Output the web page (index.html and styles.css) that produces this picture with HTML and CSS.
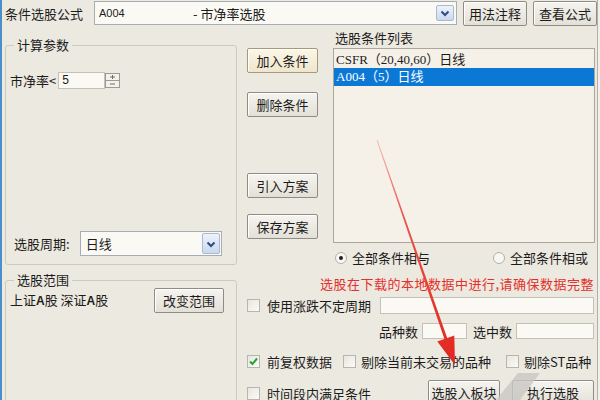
FILE: index.html
```html
<!DOCTYPE html>
<html lang="zh-CN">
<head>
  <meta charset="UTF-8">
  <title>条件选股</title>
  <link rel="stylesheet" href="styles.css">
</head>
<body>

  <div class="window">

    <!-- formula selector -->
    <div class="top-bar">
      <span class="top-label">条件选股公式</span>
      <div class="combo formula-combo">
        <span class="formula-code">A004</span>
        <span class="formula-name">- 市净率选股</span>
        <span class="drop-btn top-drop">
          <svg width="12" height="12" viewBox="0 0 12 12"><path d="M2.5 4.5 L6 8 L9.5 4.5" fill="none" stroke="#2d4d80" stroke-width="2"/></svg>
        </span>
      </div>
      <button class="btn top-btn">用法注释</button>
      <button class="btn top-btn">查看公式</button>
    </div>

    <div class="main">

      <!-- left column: parameters + market range -->
      <div class="left-col">
        <fieldset class="group params">
          <legend>计算参数</legend>
          <div class="param-row">
            <span>市净率&lt;</span>
            <span class="field param-input">5</span>
            <span class="spinner">
              <svg width="15" height="15" viewBox="0 0 15 15">
                <rect x="0.5" y="0.5" width="14" height="14" fill="#f3f1ea" stroke="#9c9a92"/>
                <line x1="1" y1="7.5" x2="14" y2="7.5" stroke="#9c9a92"/>
                <line x1="5" y1="4" x2="10" y2="4" stroke="#6d6b66"/>
                <line x1="7.5" y1="2" x2="7.5" y2="6" stroke="#6d6b66"/>
                <line x1="5" y1="11" x2="10" y2="11" stroke="#6d6b66"/>
              </svg>
            </span>
          </div>
          <div class="period-row">
            <span>选股周期:</span>
            <div class="combo period-combo">
              <span class="period-text">日线</span>
              <span class="drop-btn period-drop">
                <svg width="12" height="12" viewBox="0 0 12 12"><path d="M2.5 4.5 L6 8 L9.5 4.5" fill="none" stroke="#2d4d80" stroke-width="2"/></svg>
              </span>
            </div>
          </div>
        </fieldset>

        <fieldset class="group range">
          <legend>选股范围</legend>
          <div class="range-row">
            <span class="market">上证<b>A</b>股 深证<b>A</b>股</span>
            <button class="btn range-btn">改变范围</button>
          </div>
        </fieldset>
      </div>

      <!-- right column: actions, condition list, options -->
      <div class="right-col">
        <div class="upper">
          <div class="action-col">
            <button class="btn action-btn add-btn">加入条件</button>
            <button class="btn action-btn del-btn">删除条件</button>
            <button class="btn action-btn import-btn">引入方案</button>
            <button class="btn action-btn save-btn">保存方案</button>
          </div>
          <div class="list-col">
            <div class="list-title">选股条件列表</div>
            <ul class="cond-list">
              <li>CSFR（20,40,60）日线</li>
              <li class="selected">A004（5）日线</li>
            </ul>
          </div>
        </div>

        <div class="radio-row">
          <span class="radio on"><span class="dot"></span></span>
          <span class="radio-text">全部条件相与</span>
          <span class="radio second"></span>
          <span class="radio-text">全部条件相或</span>
        </div>

        <div class="notice">选股在下载的本地数据中进行,请确保数据完整</div>

        <div class="opt-row row-cycle">
          <span class="check"></span>
          <span class="opt-text">使用涨跌不定周期</span>
          <span class="field cycle-field"></span>
        </div>

        <div class="opt-row row-count">
          <span class="count-label">品种数</span>
          <span class="field count-field"></span>
          <span class="count-label picked">选中数</span>
          <span class="field picked-field"></span>
        </div>

        <div class="opt-row row-flags">
          <span class="check">
            <svg width="11" height="11" viewBox="0 0 11 11"><path d="M2 5.5 L4.5 8 L9 2.5" fill="none" stroke="#26a23a" stroke-width="2"/></svg>
          </span>
          <span class="opt-text">前复权数据</span>
          <span class="check flag2"></span>
          <span class="opt-text">剔除当前未交易的品种</span>
          <span class="check flag3"></span>
          <span class="opt-text">剔除ST品种</span>
        </div>

        <div class="opt-row row-run">
          <span class="check run-check"></span>
          <span class="opt-text run-text">时间段内满足条件</span>
          <button class="btn block-btn">选股入板块</button>
          <button class="btn run-btn">执行选股</button>
        </div>
      </div>
    </div>
  </div>

  <!-- red annotation arrow + watermark drawn over the dialog -->
  <svg class="overlay" width="600" height="400" viewBox="0 0 600 400">
    <defs>
      <linearGradient id="fade" x1="377" y1="140" x2="455" y2="365" gradientUnits="userSpaceOnUse">
        <stop offset="0" stop-color="#f3b9b0"/>
        <stop offset="0.35" stop-color="#e8544a"/>
        <stop offset="1" stop-color="#e2261d"/>
      </linearGradient>
    </defs>
    <polygon points="496,400 518,373 540,373 520,400" fill="#c9c7c2" opacity="0.8"/>
    <polygon points="376.6,140.2 377.4,139.8 447.2,337.9 454.3,335.5 455,365 437.3,341.5 444.4,339" fill="url(#fade)"/>
  </svg>

</body>
</html>
```

FILE: styles.css
```css
body {
  margin: 0;
  width: 600px;
  height: 400px;
  overflow: hidden;
  position: relative;
  background-color: #f1efea;
  color: #1c1c1c;
  font-family: "Noto Sans CJK SC", sans-serif;
  font-size: 13px;
  line-height: 17px;
}

.window {
  box-sizing: border-box;
  width: 598px;
  height: 400px;
  background-color: #ece9e0;
  border-left: 2px solid #4a8fca;
  border-right: 1px solid #b3b0a6;
}

/* buttons */
.btn {
  font: inherit;
  color: #1c1c1c;
  height: 25px;
  padding: 0;
  border: 1px solid #8f8c85;
  border-radius: 2px;
  background: linear-gradient(#f6f4ef, #e3e0d7);
  box-shadow: inset 1px 1px 0 #ffffff;
}

/* top bar */
.top-bar {
  display: flex;
  align-items: center;
  height: 26px;
  padding-left: 3px;
}

.top-label {
  margin-right: 11px;
}

.combo {
  box-sizing: border-box;
  display: flex;
  align-items: center;
  border: 1px solid #a8adb5;
  background-color: #fbf9f4;
}

.formula-combo {
  width: 363px;
  height: 24px;
  padding-left: 4px;
}

.formula-code {
  width: 94px;
  font-family: "Liberation Sans", sans-serif;
  font-size: 11px;
}

.drop-btn {
  box-sizing: border-box;
  display: flex;
  align-items: center;
  justify-content: center;
  margin-left: auto;
  border: 1px solid #a9bbd3;
  border-radius: 2px;
  background: linear-gradient(#eef3fa, #c9d9ee);
}

.top-drop {
  width: 18px;
  height: 16px;
  margin-right: 2px;
}

.top-btn {
  width: 64px;
  margin-left: 6px;
}

/* main area */
.main {
  display: flex;
  gap: 10px;
  padding-left: 3px;
}

.left-col {
  width: 232px;
}

.group {
  box-sizing: border-box;
  margin: 0;
  padding: 0;
  min-width: 0;
  border: 1px solid #cdcabf;
  border-radius: 3px;
}

.group legend {
  margin-left: 8px;
  padding: 0 3px;
  line-height: 16px;
}

.params {
  height: 228px;
  margin-top: 11px;
}

.param-row {
  display: flex;
  align-items: center;
  height: 17px;
  margin: 19px 0 0 4px;
}

.field {
  box-sizing: border-box;
  display: inline-block;
  border: 1px solid #c4c1b8;
  background-color: #fbf9f4;
}

.param-input {
  width: 47px;
  height: 17px;
  margin-left: 2px;
  padding-left: 3px;
  font-family: "Liberation Sans", sans-serif;
  font-size: 12px;
  line-height: 15px;
}

.spinner {
  display: flex;
}

.period-row {
  display: flex;
  align-items: center;
  height: 25px;
  margin: 142px 0 0 8px;
}

.period-combo {
  width: 142px;
  height: 25px;
  margin-left: 10px;
  padding-left: 5px;
}

.period-drop {
  width: 18px;
  height: 21px;
  margin-right: 1px;
}

.range {
  height: 140px;
  margin-top: 7px;
}

.range-row {
  display: flex;
  align-items: center;
  height: 25px;
  margin-left: 4px;
}

.market b {
  font-family: "Liberation Sans", sans-serif;
  font-size: 12px;
}

.range-btn {
  width: 70px;
  margin-left: auto;
  margin-right: 12px;
}

/* right column */
.right-col {
  width: 350px;
  display: flex;
  flex-direction: column;
}

.upper {
  display: flex;
  gap: 15px;
  height: 217px;
}

.action-col {
  display: flex;
  flex-direction: column;
  width: 71px;
}

.action-btn {
  width: 71px;
}

.add-btn {
  margin-top: 22px;
  background: linear-gradient(#fbf6e6, #efe6cc);
  border-color: #a59a7c;
}

.del-btn {
  margin-top: 19px;
}

.import-btn {
  margin-top: 56px;
}

.save-btn {
  margin-top: 16px;
}

.list-col {
  width: 262px;
}

.list-title {
  margin-top: 4px;
  padding-left: 2px;
  line-height: 16px;
}

.cond-list {
  box-sizing: border-box;
  height: 195px;
  margin: 2px 0 0;
  padding: 3px 0;
  list-style: none;
  border: 1px solid #aaa69b;
  background-color: #f6f1e8;
  font-family: "Liberation Serif", "Noto Sans CJK SC", serif;
  font-size: 13px;
}

.cond-list li {
  height: 16px;
  line-height: 16px;
  padding-left: 2px;
}

.cond-list li.selected {
  height: 18px;
  line-height: 18px;
  background-color: #0c78d5;
  color: #ffffff;
}

.radio-row {
  display: flex;
  align-items: center;
  height: 17px;
  margin-top: 6px;
  padding-left: 88px;
}

.radio {
  box-sizing: border-box;
  display: flex;
  align-items: center;
  justify-content: center;
  width: 12px;
  height: 12px;
  border: 1px solid #b4b1a8;
  border-radius: 50%;
  background-color: #f8f7f3;
}

.radio .dot {
  width: 4px;
  height: 4px;
  border-radius: 50%;
  background-color: #222222;
}

.radio.second {
  margin-left: 63px;
}

.radio-text {
  margin-left: 5px;
}

.notice {
  margin-top: 9px;
  padding-right: 3px;
  text-align: right;
  letter-spacing: 0.5px;
  color: #e4302b;
}

.opt-row {
  display: flex;
  align-items: center;
  height: 18px;
}

.check {
  box-sizing: border-box;
  display: flex;
  align-items: center;
  justify-content: center;
  width: 13px;
  height: 13px;
  border: 1px solid #b8b5ab;
  background: linear-gradient(135deg, #e8e6df, #fbfaf7);
}

.opt-text {
  margin-left: 7px;
}

.row-cycle {
  margin-top: 4px;
}

.cycle-field {
  width: 214px;
  height: 17px;
  margin-left: auto;
  margin-right: 3px;
}

.row-count {
  margin-top: 8px;
  justify-content: flex-end;
  padding-right: 3px;
}

.count-field {
  height: 16px;
  width: 45px;
  margin-left: 4px;
}

.count-label.picked {
  margin-left: 6px;
}

.picked-field {
  height: 16px;
  width: 78px;
  margin-left: 4px;
}

.row-flags {
  height: 17px;
  margin-top: 13px;
}

.flag2 {
  margin-left: 11px;
}

.flag3 {
  margin-left: 15px;
}

.opt-text + .check + .opt-text {
  margin-left: 5px;
}

.row-run {
  align-items: flex-start;
  height: 25px;
  margin-top: 10px;
}

.run-check {
  margin-top: 7px;
}

.run-text {
  margin-top: 5px;
}

.block-btn {
  width: 72px;
  margin-left: auto;
}

.run-btn {
  width: 82px;
  margin-left: 12px;
  margin-right: 3px;
}

/* annotation overlay */
.overlay {
  position: absolute;
  top: 0;
  left: 0;
  pointer-events: none;
}
```
